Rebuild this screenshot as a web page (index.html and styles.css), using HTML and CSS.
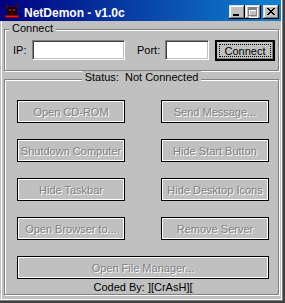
FILE: index.html
```html
<!DOCTYPE html>
<html lang="en">

<head>
    <meta charset="UTF-8">
    <meta name="viewport" content="width=device-width, initial-scale=1.0">
    <title>NetDemon - v1.0c</title>
    <link rel="stylesheet" href="styles.css">
</head>

<body>
    <div class="window">
        <div class="titlebar">
            <!-- little demon head icon -->
            <svg class="app-icon" width="16" height="16" viewBox="0 0 16 16" shape-rendering="crispEdges">
                <polygon points="1,1 3,1 6,5 4,6" fill="#5a0000" />
                <polygon points="15,1 13,1 10,5 12,6" fill="#5a0000" />
                <rect x="4" y="4" width="8" height="8" fill="#1a0000" />
                <rect x="3" y="5" width="10" height="6" fill="#1a0000" />
                <rect x="5" y="6" width="2" height="2" fill="#c00000" />
                <rect x="9" y="6" width="2" height="2" fill="#c00000" />
                <rect x="6" y="10" width="4" height="1" fill="#600000" />
                <rect x="1" y="12" width="14" height="3" fill="#8c0000" />
                <rect x="2" y="13" width="12" height="1" fill="#e02020" />
            </svg>
            <span class="title">NetDemon - v1.0c</span>
            <div class="caption-buttons">
                <button class="cap-btn">
                    <svg width="16" height="14" viewBox="0 0 16 14" shape-rendering="crispEdges">
                        <rect x="4" y="9" width="6" height="2" fill="#000" />
                    </svg>
                </button>
                <button class="cap-btn">
                    <svg width="16" height="14" viewBox="0 0 16 14" shape-rendering="crispEdges">
                        <path d="M4 3h9v10h-9z M5 6h7v6h-7z" fill="#fff" fill-rule="evenodd" />
                        <path d="M3 2h9v9h-9z M4 5h7v5h-7z" fill="#808080" fill-rule="evenodd" />
                    </svg>
                </button>
                <button class="cap-btn cap-close">
                    <svg width="16" height="14" viewBox="0 0 16 14" shape-rendering="crispEdges">
                        <path d="M4 3h2v1h-2z M10 3h2v1h-2z M5 4h2v1h-2z M9 4h2v1h-2z M6 5h4v1h-4z M7 6h2v1h-2z M6 7h4v1h-4z M5 8h2v1h-2z M9 8h2v1h-2z M4 9h2v1h-2z M10 9h2v1h-2z" fill="#000" />
                    </svg>
                </button>
            </div>
        </div>

        <div class="client">
            <div class="group group-connect">
                <span class="group-label">Connect</span>
                <label class="field-label ip-label" for="ip">IP:</label>
                <input class="field ip-field" id="ip" type="text">
                <label class="field-label port-label" for="port">Port:</label>
                <input class="field port-field" id="port" type="text">
                <button class="btn-default">Connect</button>
            </div>

            <div class="group group-status">
                <span class="group-label centered">Status:&nbsp; Not Connected</span>
                <div class="actions">
                    <button class="action" disabled>Open CD-ROM</button>
                    <button class="action" disabled>Send Message...</button>
                    <button class="action" disabled>Shutdown Computer</button>
                    <button class="action" disabled>Hide Start Button</button>
                    <button class="action" disabled>Hide Taskbar</button>
                    <button class="action" disabled>Hide Desktop Icons</button>
                    <button class="action" disabled>Open Browser to...</button>
                    <button class="action" disabled>Remove Server</button>
                    <button class="action wide" disabled>Open File Manager...</button>
                </div>
                <p class="credit">Coded By: ][CrAsH][</p>
            </div>
        </div>
    </div>
</body>

</html>
```

FILE: styles.css
```css
body {
    margin: 0;
    font-family: "Liberation Sans", Arial, sans-serif;
    font-size: 11px;
    color: #000;
}

.window {
    width: 285px;
    height: 303px;
    box-sizing: border-box;
    background-color: #c0c0c0;
    box-shadow: inset -1px -1px 0 #404040, inset -2px -2px 0 #404040, inset -3px -3px 0 #808080,
        inset -4px -4px 0 #fff, inset 1px 0 0 #c0c0c0, inset 2px 0 0 #fff;
}

/* title bar */
.titlebar {
    display: flex;
    align-items: flex-start;
    width: 281px;
    height: 21px;
    background: linear-gradient(to right, #000080, #1084d0);
    color: #fff;
}

.app-icon {
    flex: none;
    margin: 3px 0 0 4px;
}

.title {
    margin: 5px 0 0 4px;
    font-weight: bold;
    font-size: 12px;
    line-height: 16px;
    white-space: nowrap;
}

.caption-buttons {
    display: flex;
    margin: 5px 2px 0 auto;
}

.cap-btn {
    width: 16px;
    height: 14px;
    padding: 0;
    border: 0;
    background-color: #c0c0c0;
    box-shadow: inset -1px -1px 0 #000, inset 1px 1px 0 #dfdfdf, inset -2px -2px 0 #808080, inset 2px 2px 0 #fff;
}

.cap-btn svg {
    display: block;
}

.cap-close {
    margin-left: 2px;
}

/* client area */
.client {
    padding: 8px 0 0 4px;
}

.group {
    position: relative;
    box-sizing: border-box;
    width: 275px;
    border: 1px solid #808080;
    box-shadow: inset 1px 1px 0 #fff, 1px 1px 0 #fff;
}

.group-label {
    position: absolute;
    top: -8px;
    left: 4px;
    padding: 0 3px;
    line-height: 13px;
    background-color: #c0c0c0;
    white-space: nowrap;
}

.group-label.centered {
    top: -9px;
    left: 50%;
    transform: translateX(-50%);
}

.group-connect {
    display: flex;
    align-items: flex-start;
    height: 42px;
    padding: 10px 0 0 8px;
}

.field-label {
    line-height: 20px;
}

.ip-label {
    width: 19px;
}

.port-label {
    width: 28px;
    margin-left: 12px;
}

.field {
    height: 20px;
    box-sizing: border-box;
    padding: 0 2px;
    border: 1px solid;
    border-color: #808080 #fff #fff #808080;
    box-shadow: inset 1px 1px 0 #404040, inset -1px -1px 0 #c0c0c0;
    background-color: #fff;
    font: inherit;
    outline: none;
}

.ip-field {
    width: 93px;
}

.port-field {
    width: 44px;
}

.btn-default {
    width: 60px;
    height: 21px;
    margin-left: 6px;
    padding: 0;
    border: 1px solid #000;
    box-shadow: inset 1px 1px 0 #000, inset -1px -1px 0 #000, inset -2px -2px 0 #808080;
    background-color: #c0c0c0;
    color: #000;
    font: inherit;
    outline: 1px dotted #000;
    outline-offset: -5px;
}

.group-status {
    height: 216px;
    margin-top: 8px;
    padding: 20px 9px 0 12px;
}

.actions {
    display: grid;
    grid-template-columns: 108px 108px;
    grid-auto-rows: 23px;
    column-gap: 36px;
    row-gap: 16px;
}

.action {
    padding: 0;
    border: 1px solid #000;
    box-shadow: inset 0 0 0 1px #fff;
    background-color: #c0c0c0;
    color: #808080;
    text-shadow: 1px 1px 0 #fff;
    font: inherit;
    white-space: nowrap;
}

.action.wide {
    grid-column: 1 / -1;
}

.credit {
    margin: 2px 0 0;
    line-height: 13px;
    text-align: center;
}
```
